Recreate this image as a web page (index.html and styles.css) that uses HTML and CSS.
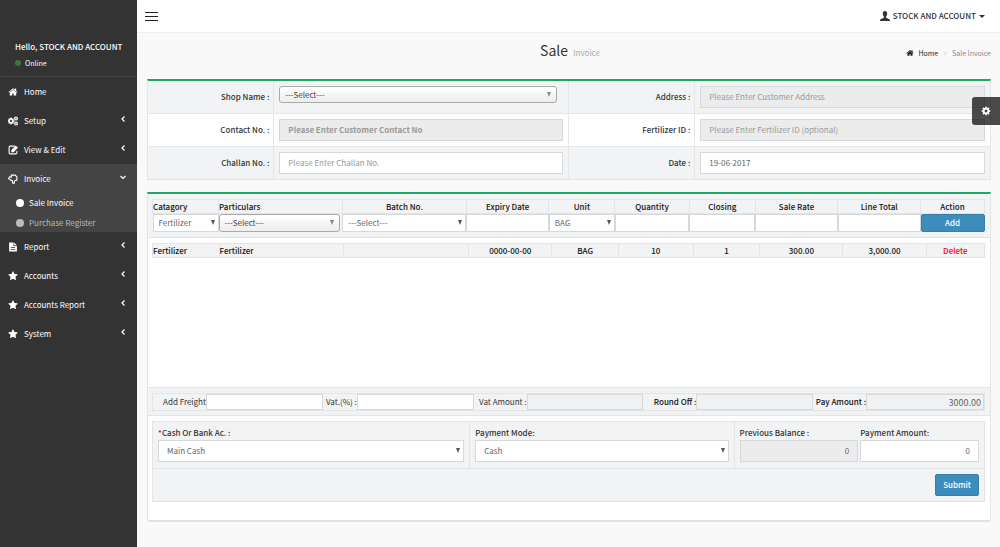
FILE: index.html
```html
<!DOCTYPE html>
<html lang="en">
<head>
    <meta charset="UTF-8">
    <meta name="viewport" content="width=device-width, initial-scale=1.0">
    <title>Sale Invoice</title>
    <link rel="stylesheet" href="styles.css">
</head>
<body>
    <!-- shared icon shapes -->
    <svg class="icon-defs" aria-hidden="true">
        <symbol id="i-home" viewBox="0 0 1792 1792"><path d="M1472 992v480q0 26-19 45t-45 19h-384v-384h-256v384h-384q-26 0-45-19t-19-45v-480q0-1 .5-3t.5-3l575-474 575 474q1 2 1 6zm223-69l-62 74q-8 9-21 11h-3q-13 0-21-7l-692-577-692 577q-12 8-24 7-13-2-21-11l-62-74q-8-10-7-23.500t11-21.500l719-599q32-26 76-26t76 26l244 204v-195q0-14 9-23t23-9h192q14 0 23 9t9 23v408l219 182q10 8 11 21.500t-7 23.500z"/></symbol>
        <symbol id="i-star" viewBox="0 0 1792 1792"><path d="M1728 647q0 22-26 48l-363 354 86 500q1 7 1 20 0 21-10.500 35.500t-30.500 14.500q-19 0-40-12l-449-236-449 236q-22 12-40 12-21 0-31.500-14.500t-10.500-35.500q0-6 2-20l86-500-364-354q-25-27-25-48 0-37 56-46l502-73 225-455q19-41 49-41t49 41l225 455 502 73q56 9 56 46z"/></symbol>
        <symbol id="i-cog" viewBox="0 0 1792 1792"><path d="M1152 896q0-106-75-181t-181-75-181 75-75 181 75 181 181 75 181-75 75-181zm512-109v222q0 12-8 23t-20 13l-185 28q-19 54-39 91 35 50 107 138 10 12 10 25t-9 23q-27 37-99 108t-94 71q-12 0-26-9l-138-108q-44 23-91 38-16 136-29 186-7 28-36 28h-222q-14 0-24.500-8.500t-11.500-21.500l-28-184q-49-16-90-37l-141 107q-10 9-25 9-14 0-25-11-126-114-165-168-7-10-7-23 0-12 8-23 15-21 51-66.500t54-70.500q-27-50-41-99l-183-27q-13-2-21-12.500t-8-23.500v-222q0-12 8-23t19-13l186-28q14-46 39-92-40-57-107-138-10-12-10-24 0-10 9-23 26-36 98.500-107.500t94.500-71.500q13 0 26 10l138 107q44-23 91-38 16-136 29-186 7-28 36-28h222q14 0 24.500 8.500t11.500 21.500l28 184q49 16 90 37l142-107q9-9 24-9 13 0 25 10 129 119 165 170 7 8 7 22 0 12-8 23-15 21-51 66.500t-54 70.500q26 50 41 98l183 28q13 2 21 12.500t8 23.500z"/></symbol>
        <symbol id="i-left" viewBox="0 0 8 8"><path d="M5.500 1.500L3 4l2.500 2.500" fill="none" stroke="currentColor" stroke-width="1.200"/></symbol>
        <symbol id="i-down" viewBox="0 0 8 8"><path d="M1.500 3L4 5.500 6.500 3" fill="none" stroke="currentColor" stroke-width="1.200"/></symbol>
    </svg>

    <div class="wrapper">
        <aside class="sidebar">
            <div class="user-panel">
                <p class="user-name">Hello, STOCK AND ACCOUNT</p>
                <a href="#" class="user-status"><span class="dot"></span>Online</a>
            </div>
            <nav>
                <ul class="menu">
                    <li><a href="#"><svg class="icon"><use href="#i-home"/></svg>Home</a></li>
                    <li><a href="#"><svg class="icon" viewBox="0 0 20 20"><use href="#i-cog" x="-2" y="2" width="16" height="16"/><use href="#i-cog" x="11" y="0" width="10" height="10"/><use href="#i-cog" x="11" y="10" width="10" height="10"/></svg>Setup<svg class="arrow"><use href="#i-left"/></svg></a></li>
                    <li><a href="#"><svg class="icon" viewBox="0 0 18 18"><path d="M12 2H4a2 2 0 0 0-2 2v10a2 2 0 0 0 2 2h10a2 2 0 0 0 2-2v-3" fill="none" stroke="currentColor" stroke-width="2"/><path d="M6 13V9l8-8 4 4-8 8z"/></svg>View &amp; Edit<svg class="arrow"><use href="#i-left"/></svg></a></li>
                    <li class="active">
                        <a href="#"><svg class="icon" viewBox="0 0 18 18"><path d="M6 2h7l3 3v6l-4 1-1 5-3-1v-4l-3-1-4-3 2-3 3 1z" fill="none" stroke="currentColor" stroke-width="2" stroke-linejoin="round"/></svg>Invoice<svg class="arrow"><use href="#i-down"/></svg></a>
                        <ul class="submenu">
                            <li class="current"><a href="#"><span class="bullet"></span>Sale Invoice</a></li>
                            <li><a href="#"><span class="bullet"></span>Purchase Register</a></li>
                        </ul>
                    </li>
                    <li><a href="#"><svg class="icon" viewBox="0 0 18 18"><path fill-rule="evenodd" d="M2 1h8v6h6v10H2zM11 1l5 5h-5zM5 9v1.500h8V9zm0 4v1.500h8V13z"/></svg>Report<svg class="arrow"><use href="#i-left"/></svg></a></li>
                    <li><a href="#"><svg class="icon"><use href="#i-star"/></svg>Accounts<svg class="arrow"><use href="#i-left"/></svg></a></li>
                    <li><a href="#"><svg class="icon"><use href="#i-star"/></svg>Accounts Report<svg class="arrow"><use href="#i-left"/></svg></a></li>
                    <li><a href="#"><svg class="icon"><use href="#i-star"/></svg>System<svg class="arrow"><use href="#i-left"/></svg></a></li>
                </ul>
            </nav>
        </aside>

        <div class="main">
            <header class="topbar">
                <button type="button" class="toggle" aria-label="Toggle menu"><span></span><span></span><span></span></button>
                <a href="#" class="account">
                    <svg class="icon" viewBox="0 0 18 18"><path d="M9 0c3 0 4 2 4 5 0 2-1 4-2 5v2l6 3c1 1 1 2 1 3H0c0-1 0-2 1-3l6-3v-2C6 9 5 7 5 5c0-3 1-5 4-5z"/></svg>
                    STOCK AND ACCOUNT <span class="caret"></span>
                </a>
            </header>

            <section class="page-head">
                <h1>Sale <small>Invoice</small></h1>
                <div class="breadcrumb">
                    <a href="#"><svg class="icon"><use href="#i-home"/></svg>Home</a>
                    <span class="sep">&gt;</span>
                    <span>Sale Invoice</span>
                </div>
            </section>

            <form class="content">
                <div class="box details">
                    <div class="cell label"><label for="shop">Shop Name :</label></div>
                    <div class="cell"><span class="select chosen"><select id="shop"><option>---Select---</option></select></span></div>
                    <div class="cell label"><label for="address">Address :</label></div>
                    <div class="cell"><input type="text" id="address" placeholder="Please Enter Customer Address" disabled></div>

                    <div class="cell label white"><label for="contact">Contact No. :</label></div>
                    <div class="cell white"><input type="text" id="contact" class="bold" placeholder="Please Enter Customer Contact No" disabled></div>
                    <div class="cell label white"><label for="fertId">Fertilizer ID :</label></div>
                    <div class="cell white"><input type="text" id="fertId" placeholder="Please Enter Fertilizer ID (optional)" disabled></div>

                    <div class="cell label"><label for="challan">Challan No. :</label></div>
                    <div class="cell"><input type="text" id="challan" placeholder="Please Enter Challan No."></div>
                    <div class="cell label"><label for="date">Date :</label></div>
                    <div class="cell"><input type="text" id="date" value="19-06-2017"></div>
                </div>

                <div class="box invoice">
                    <div class="entry">
                        <table class="grid entry-table">
                            <colgroup><col class="c-cat"><col class="c-part"><col class="c-part"><col class="c-exp"><col class="c-unit"><col class="c-qty"><col class="c-unit"><col class="c-exp"><col class="c-exp"><col class="c-act"></colgroup>
                            <thead>
                                <tr>
                                    <th class="left"><label for="category">Catagory</label></th>
                                    <th class="left"><label for="particulars">Particulars</label></th>
                                    <th><label for="batch">Batch No.</label></th>
                                    <th><label for="expiry">Expiry Date</label></th>
                                    <th><label for="unit">Unit</label></th>
                                    <th><label for="qty">Quantity</label></th>
                                    <th><label for="closing">Closing</label></th>
                                    <th><label for="rate">Sale Rate</label></th>
                                    <th><label for="total">Line Total</label></th>
                                    <th>Action</th>
                                </tr>
                            </thead>
                            <tbody>
                                <tr>
                                    <td><span class="select"><select id="category"><option>Fertilizer</option></select></span></td>
                                    <td><span class="select chosen"><select id="particulars"><option>---Select---</option></select></span></td>
                                    <td><span class="select"><select id="batch"><option>---Select---</option></select></span></td>
                                    <td><input type="text" id="expiry"></td>
                                    <td><span class="select"><select id="unit"><option>BAG</option></select></span></td>
                                    <td><input type="text" id="qty"></td>
                                    <td><input type="text" id="closing"></td>
                                    <td><input type="text" id="rate"></td>
                                    <td><input type="text" id="total"></td>
                                    <td><button type="button" class="btn">Add</button></td>
                                </tr>
                            </tbody>
                        </table>
                    </div>

                    <div class="lines">
                        <table class="grid">
                            <colgroup><col class="c-cat"><col class="c-part"><col class="c-part"><col class="c-exp"><col class="c-unit"><col class="c-qty"><col class="c-unit"><col class="c-exp"><col class="c-exp"><col class="c-del"></colgroup>
                            <tbody>
                                <tr>
                                    <td class="left">Fertilizer</td>
                                    <td class="left">Fertilizer</td>
                                    <td></td>
                                    <td>0000-00-00</td>
                                    <td>BAG</td>
                                    <td>10</td>
                                    <td>1</td>
                                    <td>300.00</td>
                                    <td>3,000.00</td>
                                    <td><a href="#" class="delete">Delete</a></td>
                                </tr>
                            </tbody>
                        </table>
                    </div>

                    <div class="totals">
                        <div class="totals-row">
                            <label for="freight">Add Freight</label><input type="text" id="freight">
                            <label for="vat">Vat.(%) :</label><input type="text" id="vat">
                            <label for="vatAmount">Vat Amount :</label><input type="text" id="vatAmount" readonly>
                            <label for="round" class="strong">Round Off :</label><input type="text" id="round" readonly>
                            <label for="pay" class="strong">Pay Amount :</label><input type="text" id="pay" value="3000.00" readonly>
                        </div>
                    </div>

                    <div class="payment">
                        <div class="pay-fields">
                            <div class="pay-cell">
                                <label for="bank"><span class="req">*</span>Cash Or Bank Ac. :</label>
                                <span class="select"><select id="bank"><option>Main Cash</option></select></span>
                            </div>
                            <div class="pay-cell">
                                <label for="mode">Payment Mode:</label>
                                <span class="select"><select id="mode"><option>Cash</option></select></span>
                            </div>
                            <div class="pay-cell amounts">
                                <div>
                                    <label for="previous">Previous Balance :</label>
                                    <input type="text" id="previous" value="0" disabled>
                                </div>
                                <div>
                                    <label for="amount">Payment Amount:</label>
                                    <input type="text" id="amount" value="0">
                                </div>
                            </div>
                        </div>
                        <div class="pay-actions"><button type="submit" class="btn">Submit</button></div>
                    </div>
                </div>
            </form>
        </div>
    </div>

    <button type="button" class="settings" aria-label="Settings"><svg class="icon"><use href="#i-cog"/></svg></button>
</body>
</html>
```
FILE: styles.css
```css
* {
    box-sizing: border-box;
}

body {
    margin: 0;
    font-family: "Noto Sans CJK SC", "Noto Sans", sans-serif;
    font-size: 8px;
    line-height: 14px;
    color: #333;
    background: #f9f9f9;
}

a {
    color: inherit;
    text-decoration: none;
}

ul {
    list-style: none;
    margin: 0;
    padding: 0;
}

input,
select,
button {
    font: inherit;
    color: #666;
}

.icon-defs {
    display: none;
}

.icon {
    width: 10px;
    height: 10px;
    fill: currentColor;
    flex: none;
}

.wrapper {
    display: flex;
    min-height: 100vh;
}

/* sidebar */
.sidebar {
    width: 137px;
    flex: none;
    background: #333;
    color: #fff;
}

.user-panel {
    padding: 40px 0 7px 15px;
    border-bottom: 1px solid #444;
}

.user-name {
    margin: 0 0 2px;
    font-weight: 500;
    white-space: nowrap;
}

.user-status {
    display: flex;
    align-items: center;
    gap: 4px;
    height: 13px;
    font-size: 7px;
}

.dot {
    width: 6px;
    height: 6px;
    border-radius: 50%;
    background: #3c763d;
}

.menu > li > a {
    display: flex;
    align-items: center;
    height: 29px;
    padding: 0 10px 0 8px;
    gap: 6px;
}

.menu .arrow {
    width: 8px;
    height: 8px;
    margin: 0 0 4px auto;
    fill: none;
}

.menu .active {
    background: #444;
}

.submenu {
    padding-left: 16px;
}

.submenu a {
    display: flex;
    align-items: center;
    gap: 5px;
    height: 19px;
    color: #bbb;
}

.submenu .current a {
    height: 20px;
    color: #fff;
}

.bullet {
    width: 8px;
    height: 8px;
    border-radius: 50%;
    background: currentColor;
}

/* top bar and heading */
.main {
    flex: 1;
    min-width: 0;
}

.topbar {
    display: flex;
    justify-content: space-between;
    align-items: center;
    height: 33px;
    padding: 0 15px 0 8px;
    background: #fff;
    border-bottom: 1px solid #eee;
}

.toggle {
    display: flex;
    flex-direction: column;
    gap: 3px;
    padding: 0;
    border: 0;
    background: none;
}

.toggle span {
    width: 13px;
    height: 1px;
    background: #222;
}

.account {
    display: flex;
    align-items: center;
    gap: 3px;
    font-weight: 500;
}

.caret {
    border: 3px solid transparent;
    border-top-color: #333;
    border-bottom: 0;
}

.page-head {
    display: grid;
    grid-template-columns: 1fr auto 1fr;
    align-items: center;
    height: 46px;
    padding: 0 9px 0 12px;
}

.page-head h1 {
    grid-column: 2;
    margin: 0;
    padding-bottom: 9px;
    font-size: 14px;
    font-weight: 400;
    line-height: 20px;
}

.page-head small {
    margin-left: 2px;
    font-size: 8px;
    color: #aaa;
}

.breadcrumb {
    display: flex;
    justify-content: flex-end;
    align-items: center;
    gap: 5px;
    padding-bottom: 6px;
    font-size: 7px;
    color: #888;
}

.breadcrumb a {
    display: flex;
    align-items: center;
    gap: 4px;
    color: #222;
}

.breadcrumb .icon {
    width: 8px;
    height: 8px;
}

.breadcrumb .sep {
    color: #ccc;
}

/* boxes and controls */
.content {
    padding: 0 9px 26px 10px;
}

.box {
    border: 1px solid #e2e4e6;
    border-top: 2px solid #1ea765;
    background: #fff;
}

input,
select {
    display: block;
    width: 100%;
    height: 22px;
    padding: 0 8px 1px;
    border: 1px solid #d6d8da;
    border-radius: 0;
    background: #fff;
    outline: none;
}

input::placeholder {
    color: #999;
    opacity: 1;
}

input:disabled {
    background: #ececec;
}

.bold {
    font-weight: 700;
}

.select {
    display: block;
    position: relative;
}

.select select {
    appearance: none;
    opacity: 1;
}

.select::after {
    content: "";
    position: absolute;
    top: 50%;
    right: 4px;
    margin-top: -3px;
    border: 2px solid transparent;
    border-top: 5px solid #555;
    border-bottom: 0;
    pointer-events: none;
}

.chosen select {
    height: 17px;
    padding: 0 5px;
    border: 1px solid #aaa;
    border-radius: 3px;
    background: linear-gradient(#fff 20%, #f4f4f4 50%, #eee 100%);
    color: #444;
}

.chosen::after {
    right: 6px;
    border-top-color: #888;
}

.btn {
    padding: 0 7px;
    border: 1px solid #367fa9;
    border-radius: 2px;
    background: #3c8dbc;
    color: #fff;
    font-weight: 500;
}

/* customer details */
.details {
    display: grid;
    grid-template-columns: 15fr 35fr 15fr 35fr;
    margin-bottom: 12px;
}

.cell {
    padding: 5px;
    border-bottom: 1px solid #e4e6e8;
    border-right: 1px solid #e4e6e8;
    background: #f2f3f5;
}

.cell:nth-child(4n) {
    border-right: 0;
}

.cell:nth-last-child(-n+4) {
    border-bottom: 0;
}

.cell.label {
    display: flex;
    align-items: center;
    justify-content: flex-end;
    padding-right: 4px;
    font-weight: 500;
}

.cell.white {
    background: #fff;
}

.cell .chosen {
    width: 98%;
    margin-bottom: 5px;
}

/* invoice lines */
.invoice {
    border-bottom: 2px solid #e0e2e4;
    padding-bottom: 18px;
    border-radius: 0 0 2px 2px;
}

.entry {
    padding: 5px 5px 5px 4px;
    border-bottom: 1px solid #e2e4e6;
    background: #f2f3f5;
}

.grid {
    width: 100%;
    table-layout: fixed;
    border-collapse: collapse;
    text-align: center;
    color: #111;
    font-weight: 500;
}

.grid th,
.grid td {
    height: 14px;
    padding: 0;
    border: 1px solid #e2e4e6;
    font-weight: 500;
    line-height: 12px;
    background: #f2f3f5;
}

.grid .left {
    text-align: left;
}

.entry-table input,
.entry-table select {
    height: 18px;
    font-weight: 400;
    padding: 0 5px;
}

.entry-table td {
    border: 0;
}

.entry-table .chosen {
    width: 98%;
}

.entry-table .btn {
    display: block;
    width: 100%;
    height: 18px;
}

.c-cat { width: 8%; }
.c-part { width: 15%; }
.c-exp { width: 10%; }
.c-unit { width: 8%; }
.c-qty { width: 9%; }
.c-act { width: 64px; }
.c-del { width: 7%; }

.lines {
    min-height: 149px;
    padding: 5px 5px 5px 4px;
}

.delete {
    color: #f00;
}

.totals {
    padding: 5px 5px 4px 4px;
    border: 1px solid #e2e4e6;
    border-width: 1px 0;
    background: #f2f3f5;
}

.totals-row {
    display: grid;
    grid-template-columns: 53fr 117fr 34fr 117fr 53fr 117fr 53fr 117fr 53fr 118fr;
    align-items: center;
    border: 1px solid #e2e4e6;
    text-align: right;
}

.totals-row label {
    white-space: nowrap;
}

.totals-row input {
    height: 16px;
    padding: 0 2px;
    font-size: 9px;
    text-align: right;
}

.totals-row input:read-only {
    background: #f0f1f3;
}

.strong {
    color: #111;
    font-weight: 500;
}

/* payment */
.payment {
    margin: 5px 5px 0 4px;
    border: 1px solid #e2e4e6;
    background: #f2f3f5;
}

.pay-fields {
    display: grid;
    grid-template-columns: 318fr 265fr 250fr;
    border-bottom: 1px solid #e2e4e6;
}

.pay-cell {
    padding: 4px 5px 6px;
    border-right: 1px solid #e2e4e6;
}

.pay-cell:last-child {
    border-right: 0;
}

.pay-cell label {
    display: block;
    font-weight: 500;
}

.amounts {
    display: grid;
    grid-template-columns: 1fr 1fr;
    gap: 2px;
}

.amounts input {
    text-align: right;
}

.req {
    color: #f00;
}

.pay-actions {
    padding: 5px;
    text-align: right;
}

.pay-actions .btn {
    height: 22px;
}

/* floating settings tab */
.settings {
    position: fixed;
    top: 97px;
    right: 0;
    display: flex;
    align-items: center;
    justify-content: center;
    width: 28px;
    height: 28px;
    padding: 0;
    border: 0;
    border-radius: 3px 0 0 3px;
    background: rgba(0, 0, 0, 0.7);
    color: #fff;
}
```
